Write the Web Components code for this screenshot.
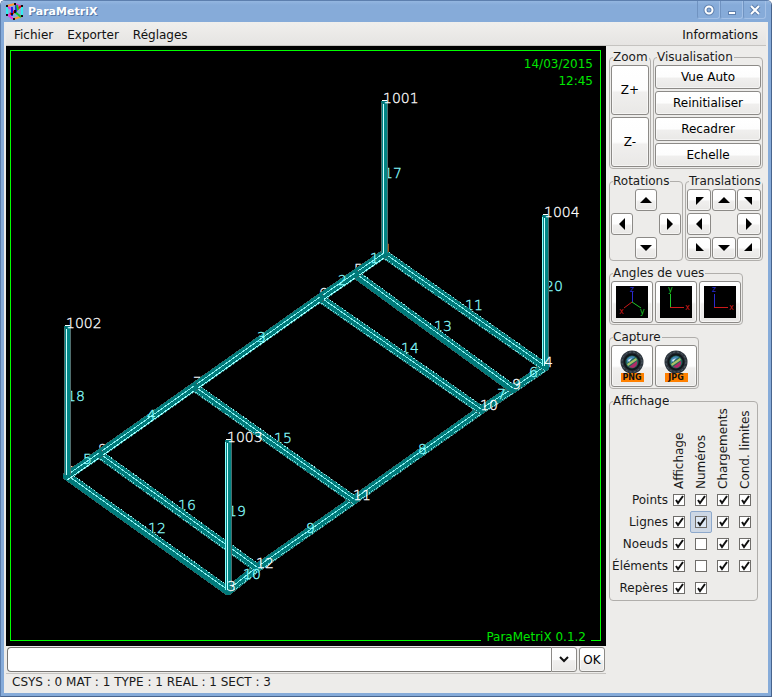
<!DOCTYPE html>
<html lang="fr">
<head>
<meta charset="utf-8">
<title>ParaMetriX</title>
<style>
  html, body { height: 100%; margin: 0; }
  body {
    --bg: #edecea;
    --line: #b0aeab;
    --edge: #8c8a87;
    --accent: #86abd9;
    font: 12px/16px "DejaVu Sans", sans-serif;
    color: #1a1a1a;
  }
</style>
</head>
<body>
<px-window caption="ParaMetriX">
  <px-menubar slot="menu">
    <a href="#">Fichier</a>
    <a href="#">Exporter</a>
    <a href="#">Réglages</a>
    <a href="#" slot="end">Informations</a>
  </px-menubar>

  <px-viewport date="14/03/2015" time="12:45" version="ParaMetriX 0.1.2"></px-viewport>
  <px-command></px-command>

  <px-toolbox slot="side">
    <px-row>
      <px-group label="Zoom">
        <px-stack class="zoom">
          <px-button class="tall">Z+</px-button>
          <px-button class="tall">Z-</px-button>
        </px-stack>
      </px-group>
      <px-group label="Visualisation" grow>
        <px-stack>
          <px-button>Vue Auto</px-button>
          <px-button>Reinitialiser</px-button>
          <px-button>Recadrer</px-button>
          <px-button>Echelle</px-button>
        </px-stack>
      </px-group>
    </px-row>
    <px-row>
      <px-group label="Rotations"><px-arrows kind="rotate"></px-arrows></px-group>
      <px-group label="Translations" grow><px-arrows kind="translate"></px-arrows></px-group>
    </px-row>
    <px-row>
      <px-group label="Angles de vues">
        <px-icons names="iso,xy,xz"></px-icons>
      </px-group>
    </px-row>
    <px-row>
      <px-group label="Capture">
        <px-icons names="PNG,JPG"></px-icons>
      </px-group>
    </px-row>
    <px-row>
      <px-group label="Affichage"><px-display></px-display></px-group>
    </px-row>
  </px-toolbox>

  <span slot="status">CSYS : 0 MAT : 1 TYPE : 1 REAL : 1 SECT : 3</span>
</px-window>

<script>
const BUTTON_CSS = `
  button {
    box-sizing: border-box;
    margin: 0;
    padding: 0;
    font: inherit;
    color: #000;
    border: 1px solid var(--edge);
    border-radius: 3px;
    background: linear-gradient(#fff, #fdfdfd 50%, #f0efee 55%, #e9e8e6);
    box-shadow: inset 0 0 0 1px #fff8;
    display: flex;
    align-items: center;
    justify-content: center;
  }
  button:active { background: #dcdad7; }
`;

class PxElement extends HTMLElement {
  connectedCallback() {
    if (this.shadowRoot) return;
    this.attachShadow({ mode: 'open' });
    this.shadowRoot.innerHTML = this.template();
  }
}

class PxWindow extends PxElement {
  template() {
    return `
      <style>
        :host {
          display: flex;
          flex-direction: column;
          box-sizing: border-box;
          height: 100%;
          overflow: hidden;
          background: var(--bg);
          border: 1px solid #5d7fae;
          border-right-color: #48648d;
          border-bottom-color: #48648d;
          border-radius: 5px 5px 0 0;
        }
        header {
          display: flex;
          align-items: center;
          gap: 4px;
          height: 21px;
          padding-left: 4px;
          background: linear-gradient(#94b6e0, var(--accent) 4px);
          color: #fff;
          font-weight: bold;
          font-size: 11px;
          text-shadow: 1px 1px 0 #5678a6;
        }
        h1 { flex: 1; margin: 0; font: inherit; }
        .controls { display: flex; align-self: flex-start; padding-right: 5px; }
        .controls button {
          width: 23px;
          height: 18px;
          margin: 0;
          padding: 0;
          border: 1px solid #a3c0e6;
          border-top: 0;
          border-left-color: #7093c1;
          border-radius: 0 0 3px 3px;
          background: none;
        }
        .controls svg { display: block; margin: auto; }
        .body {
          flex: 1;
          min-height: 0;
          display: flex;
          flex-direction: column;
          border: solid var(--accent);
          border-width: 0 3px 3px;
          padding: 0 2px;
        }
        main { flex: 1; min-height: 0; display: flex; }
        .work { flex: 1; min-width: 0; display: flex; flex-direction: column; }
        footer { padding: 0 6px 3px; line-height: 16px; }
      </style>
      <header>
        <svg width="19" height="19" viewBox="0 0 19 19" fill="none" stroke-width="2">
          <path d="M2 4v10M17 4v10" stroke="#3ee"/>
          <path d="M2 4l8-2M9 17l8-3" stroke="#f93"/>
          <path d="M10 2l6 3M3 13l5 4M3 5l6 4M9 9l-6 5" stroke="#e3d"/>
          <path d="M7 12l9-8M5 12l4-2" stroke="#e11"/>
          <path d="M7 5v9M11 3v8" stroke="#22d"/>
          <path d="M10 10l6 5M12 3l1 5" stroke="#1c3"/>
          <path d="M1 3h2v2H1zM9 1h2v2H9zM16 3h2v2h-2zM1 12h2v2H1zM8 16h2v2H8zM16 13h2v2h-2zM9 8h2v3H9zM6 11h2v2H6z" fill="#111"/>
        </svg>
        <h1>${this.getAttribute('caption')}</h1>
        <div class="controls">
          <button aria-label="Options"><svg width="12" height="12" fill="none" stroke-width="2"><circle cx="6" cy="6" r="3.5" stroke="#5f80ae" stroke-width="4"/><circle cx="6" cy="6" r="3.5" stroke="#fff"/></svg></button>
          <button aria-label="Réduire"><svg width="12" height="12"><path d="M2 7h8v4H2z" fill="#5f80ae"/><path d="M3 8h6v2H3z" fill="#fff"/></svg></button>
          <button aria-label="Fermer"><svg width="12" height="12" fill="none"><path d="m2 2 8 8m0-8-8 8" stroke="#5f80ae" stroke-width="4"/><path d="m2 2 8 8m0-8-8 8" stroke="#fff" stroke-width="2"/></svg></button>
        </div>
      </header>
      <div class="body">
        <slot name="menu"></slot>
        <main>
          <div class="work"><slot></slot></div>
          <slot name="side"></slot>
        </main>
        <footer><slot name="status"></slot></footer>
      </div>`;
  }
}

class PxMenubar extends PxElement {
  template() {
    return `
      <style>
        :host {
          display: block;
          border-bottom: 1px solid #c5c3c0;
          background: linear-gradient(#f0efed, #e6e4e2);
        }
        nav { display: flex; gap: 14px; padding: 5px 8px 2px; }
        .gap { flex: 1; }
        ::slotted(a) { color: #111; text-decoration: none; }
      </style>
      <nav><slot></slot><span class="gap"></span><slot name="end"></slot></nav>`;
  }
}

class PxToolbox extends PxElement {
  template() {
    return `
      <style>
        :host { display: flex; flex-direction: column; gap: 4px; padding: 3px 3px 0; }
      </style>
      <slot></slot>`;
  }
}

class PxRow extends PxElement {
  template() {
    return `<style>:host { display: flex; gap: 2px; }</style><slot></slot>`;
  }
}

class PxStack extends PxElement {
  template() {
    return `
      <style>
        :host { display: flex; flex-direction: column; gap: 2px; min-width: 106px; }
        :host(.zoom) { min-width: 38px; }
      </style>
      <slot></slot>`;
  }
}

class PxGroup extends PxElement {
  template() {
    return `
      <style>
        :host { display: block; }
        :host([grow]) { flex: 1; }
        fieldset {
          margin: 0;
          padding: 0 1px 1px;
          min-width: 0;
          border: 1px solid var(--line);
          border-radius: 4px;
        }
        legend { margin-left: 2px; padding: 0; line-height: 16px; white-space: nowrap; width: 0; }
        legend span { background: var(--bg); padding-right: 1px; }
      </style>
      <fieldset>
        <legend><span>${this.getAttribute('label')}</span></legend>
        <slot></slot>
      </fieldset>`;
  }
}

class PxButton extends PxElement {
  template() {
    return `
      <style>
        ${BUTTON_CSS}
        :host { display: block; }
        button { width: 100%; height: 24px; }
        :host(.tall) button { height: 50px; }
      </style>
      <button type="button"><slot></slot></button>`;
  }
}

const ARROWS = {
  nw: ['Haut gauche', 'M3 3h8l-8 8z'],
  n: ['Haut', 'M6 3l6 6H0z'],
  ne: ['Haut droite', 'M1 3h8v8z'],
  w: ['Gauche', 'M3 6l6-6v12z'],
  e: ['Droite', 'M9 6L3 0v12z'],
  sw: ['Bas gauche', 'M3 1v8h8z'],
  s: ['Bas', 'M6 9L0 3h12z'],
  se: ['Bas droite', 'M9 1v8H1z']
};

class PxArrows extends PxElement {
  template() {
    const all = this.getAttribute('kind') === 'translate';
    const cells = all
      ? ['nw', 'n', 'ne', 'w', '', 'e', 'sw', 's', 'se']
      : ['', 'n', '', 'w', '', 'e', '', 's', ''];
    return `
      <style>
        ${BUTTON_CSS}
        :host {
          display: grid;
          grid-template-columns: repeat(3, 22px);
          grid-auto-rows: 22px;
          gap: 2px;
        }
        :host([kind="translate"]) { grid-template-columns: repeat(3, 24px); column-gap: 1px; }
      </style>
      ${cells.map(c => c
        ? `<button type="button" aria-label="${ARROWS[c][0]}"><svg width="12" height="12"><path d="${ARROWS[c][1]}"/></svg></button>`
        : '<span></span>').join('')}`;
  }
}

class PxIcons extends PxElement {
  axis(name) {
    const t = (x, y, s, c) => `<text x="${x}" y="${y}" fill="${c}">${s}</text>`;
    const blue = '#2a2ad0', green = '#1ec82a', red = '#cc1a1a';
    let art;
    if (name === 'iso') {
      art = `<path d="M16.5 16V6" stroke="${blue}"/><path d="M16 16l-8 6" stroke="${red}"/><path d="M16 16l9 6" stroke="${green}"/>`
        + t(14, 6, 'z', blue) + t(3, 28, 'x', red) + t(24, 28, 'y', green);
    } else {
      const up = name === 'xy' ? green : blue;
      art = `<path d="M10.5 21V8" stroke="${up}"/><path d="M10 21.5h14" stroke="${red}"/>`
        + t(8, 6, name === 'xy' ? 'y' : 'z', up) + t(25, 24, 'x', red);
    }
    return `<svg width="32" height="32" fill="none" font-size="8"><path d="M0 0h32v32H0z" fill="#000"/>${art}</svg>`;
  }

  camera(name) {
    return `<svg width="32" height="32" font-weight="bold" font-size="8">
      <circle cx="16" cy="12" r="11.5" fill="#2c343c"/>
      <circle cx="16" cy="12" r="10" fill="none" stroke="#56626c" stroke-dasharray="2 2"/>
      <circle cx="16" cy="12" r="8.5" fill="#11161b"/>
      <circle cx="16" cy="12" r="6.5" fill="#23665a"/>
      <path d="M11 9q3-4 8-2l-8 6z" fill="#4786b8"/>
      <path d="M11 14l9-6 1 2-9 6z" fill="#a8c268"/>
      <path d="M13 17l8-6q1 5-4 7z" fill="#b42a68"/>
      <path d="M12 10l4-2-3 4z" fill="#dcebf0"/>
      <path d="M5 23h23v9H5z" fill="#ff8000"/>
      <text x="16" y="30" text-anchor="middle" fill="#111">${name}</text>
    </svg>`;
  }

  template() {
    const names = this.getAttribute('names').split(',');
    return `
      <style>
        ${BUTTON_CSS}
        :host { display: flex; gap: 2px; }
        button { width: 42px; height: 42px; }
      </style>
      ${names.map(n => `<button type="button" aria-label="${n}">${/[A-Z]/.test(n) ? this.camera(n) : this.axis(n)}</button>`).join('')}`;
  }
}

class PxDisplay extends PxElement {
  template() {
    const cols = ['Affichage', 'Numéros', 'Chargements', 'Cond. limites'];
    // 1: ticked, 0: empty, -: no box
    const rows = [
      ['Points', '1111'],
      ['Lignes', '1111'],
      ['Noeuds', '1011'],
      ['Éléments', '1011'],
      ['Repères', '11--']
    ];
    const cell = (row, col, v) => v === '-' ? '<td></td>' : `
      <td><label class="${row === 'Lignes' && col === 'Numéros' ? 'hot' : ''}">
        <input type="checkbox" aria-label="${row} ${col}" ${v === '1' ? 'checked' : ''}>
        <svg width="12" height="12"><path d="M3 6l2 3 5-7" fill="none" stroke="#111" stroke-width="2"/></svg>
      </label></td>`;
    return `
      <style>
        :host { display: block; }
        table { border-collapse: collapse; table-layout: fixed; width: 145px; }
        th, td { padding: 0; font-weight: normal; height: 22px; }
        thead th { height: 80px; width: 22px; vertical-align: bottom; }
        thead th:first-child { width: 57px; }
        thead span {
          display: block;
          writing-mode: vertical-rl;
          transform: rotate(180deg);
          text-align: left;
          line-height: 22px;
          white-space: nowrap;
          height: 80px;
        }
        tbody th { text-align: right; white-space: nowrap; }
        label {
          display: grid;
          place-items: center;
          box-sizing: border-box;
          width: 22px;
          height: 22px;
          border: 1px solid transparent;
          border-radius: 2px;
        }
        label > * { grid-area: 1 / 1; }
        input {
          appearance: none;
          box-sizing: border-box;
          width: 12px;
          height: 12px;
          margin: 0;
          background: #fff;
          border: 1px solid #6f6d6a;
        }
        svg { pointer-events: none; visibility: hidden; }
        input:checked + svg { visibility: visible; }
        .hot { background: #cdd7e4; border-color: #8ea9cc; }
        .hot input { background: #dde8f5; }
      </style>
      <table>
        <thead><tr><th></th>${cols.map(c => `<th scope="col"><span>${c}</span></th>`).join('')}</tr></thead>
        <tbody>${rows.map(([name, flags]) => `
          <tr><th scope="row">${name}</th>${cols.map((c, i) => cell(name, c, flags[i])).join('')}</tr>`).join('')}
        </tbody>
      </table>`;
  }
}

class PxCommand extends PxElement {
  template() {
    return `
      <style>
        ${BUTTON_CSS}
        :host {
          display: flex;
          gap: 2px;
          padding: 1px;
          border-bottom: 1px solid #c5c3c0;
        }
        .combo { flex: 1; display: flex; min-width: 0; }
        input {
          flex: 1;
          min-width: 0;
          box-sizing: border-box;
          height: 25px;
          margin: 0;
          padding: 0 4px;
          font: inherit;
          border: 1px solid #777572;
          border-right: 0;
          border-radius: 4px 0 0 4px;
          background: #fff;
          outline: 0;
        }
        button { width: 26px; height: 25px; }
        .combo button { border-radius: 0 3px 3px 0; }
      </style>
      <div class="combo">
        <input type="text" aria-label="Commande">
        <button type="button" aria-label="Historique"><svg width="10" height="7"><path d="M1 1l4 4 4-4" fill="none" stroke="#111" stroke-width="2"/></svg></button>
      </div>
      <button type="button">OK</button>`;
  }
}

// Projected positions of the model's points
const POINTS = {
  1: [384, 253], 2: [67, 475], 3: [228, 590], 4: [545, 366],
  5: [355, 273], 6: [320, 297], 7: [194, 386], 8: [99, 453],
  9: [513, 388], 10: [481, 409], 11: [354, 499], 12: [257, 567],
  1001: [384, 102], 1002: [67, 327], 1003: [228, 441], 1004: [545, 216]
};

const LINES = {
  1: [1, 5], 2: [5, 6], 3: [6, 7], 4: [7, 8], 5: [8, 2],
  6: [4, 9], 7: [9, 10], 8: [10, 11], 9: [11, 12], 10: [12, 3],
  11: [1, 4], 12: [2, 3], 13: [5, 9], 14: [6, 10], 15: [7, 11], 16: [8, 12],
  17: [1001, 1], 18: [1002, 2], 19: [1003, 3], 20: [1004, 4]
};

class PxViewport extends PxElement {
  label(x, y, text, color) {
    return `<text x="${x}" y="${y}" fill="${color}" stroke="${color}">${text}</text>`;
  }

  point(n) {
    const [x, y] = POINTS[n];
    return this.label(x - 1, y + 1, n, '#fff');
  }

  lineLabel(n) {
    const [a, b] = LINES[n].map(p => POINTS[p]);
    return this.label(Math.round((a[0] + b[0]) / 2), Math.round((a[1] + b[1]) / 2), n, '#8ff');
  }

  beam(n) {
    const [a, b] = LINES[n].map(p => POINTS[p]);
    const seg = (dx, dy, css) =>
      `<line x1="${a[0] + dx}" y1="${a[1] + dy}" x2="${b[0] + dx}" y2="${b[1] + dy}" ${css}/>`;
    if (n >= 17) {
      return seg(0, 0, 'stroke="#4f6e6e" stroke-width="7"')
        + seg(0, 0, 'stroke="#008484" stroke-width="5"')
        + seg(-0.5, 0, 'stroke="#cff" stroke-width="1"')
        + (n > 18 ? seg(-2.5, 0, 'stroke="#8ff" stroke-width="1"') : '')
        + `<path d="M${a[0] - 3} ${a[1] - 1}h6l-2 3h-3z" fill="#057575"/><path d="M${a[0] - 2} ${a[1] - 2}h5v1h-5z" fill="#fff"/>`;
    }
    // 1-5 run along the lit rail, 12 and 13 show no lower edge
    const lower = n <= 5 ? 'stroke="#9ff"'
      : n === 12 || n === 13 ? 'stroke="#007a7a"'
      : 'stroke="#7dd" stroke-dasharray="1 1"';
    return seg(0, 1, 'stroke="#3f6060" stroke-width="9" stroke-linecap="round"')
      + seg(0, 1, 'stroke="#007a7a" stroke-width="8" stroke-linecap="round"')
      + (n > 10 ? seg(0, -4, 'stroke="#9ee" stroke-dasharray="1 2"') : '')
      + seg(0, 5, lower)
      + seg(0, 0, 'stroke="#8ee"');
  }

  range(from, to, fn) {
    let out = '';
    for (let i = from; i <= to; i++) out += fn.call(this, i);
    return out;
  }

  template() {
    return `
      <style>
        :host {
          flex: 1;
          min-height: 0;
          display: grid;
          background: #000;
          color: #00e600;
        }
        :host > * { grid-area: 1 / 1; }
        svg { width: 100%; height: 100%; min-height: 0; font: 200 14px "DejaVu Sans", sans-serif; }
        text { stroke-width: 0.3px; }
        .frame {
          margin: 4px 5px 5px 4px;
          border: 1px solid #0f0;
          display: flex;
          flex-direction: column;
          justify-content: space-between;
          align-items: flex-end;
          z-index: 1;
        }
        .clock { padding: 5px 7px; line-height: 17px; text-align: right; }
        .version { margin: 0 9px -5px; padding: 0 5px; background: #000; }
      </style>
      <svg viewBox="6 46 600 600">
        ${this.range(11, 20, this.lineLabel)}
        ${[1, 2, 5, 6, 7, 8].map(n => this.point(n)).join('')}
        <g shape-rendering="crispEdges">${this.range(6, 16, this.beam)}${this.range(1, 5, this.beam)}</g>
        ${this.range(1, 10, this.lineLabel)}
        <g shape-rendering="crispEdges">${this.range(17, 20, this.beam)}</g>
        ${[3, 4, 9, 10, 11, 12, 1001, 1002, 1003, 1004].map(n => this.point(n)).join('')}
      </svg>
      <div class="frame">
        <div class="clock">${this.getAttribute('date')}<br>${this.getAttribute('time')}</div>
        <div class="version">${this.getAttribute('version')}</div>
      </div>`;
  }
}

customElements.define('px-window', PxWindow);
customElements.define('px-menubar', PxMenubar);
customElements.define('px-toolbox', PxToolbox);
customElements.define('px-row', PxRow);
customElements.define('px-stack', PxStack);
customElements.define('px-group', PxGroup);
customElements.define('px-button', PxButton);
customElements.define('px-arrows', PxArrows);
customElements.define('px-icons', PxIcons);
customElements.define('px-display', PxDisplay);
customElements.define('px-command', PxCommand);
customElements.define('px-viewport', PxViewport);
</script>
</body>
</html>
